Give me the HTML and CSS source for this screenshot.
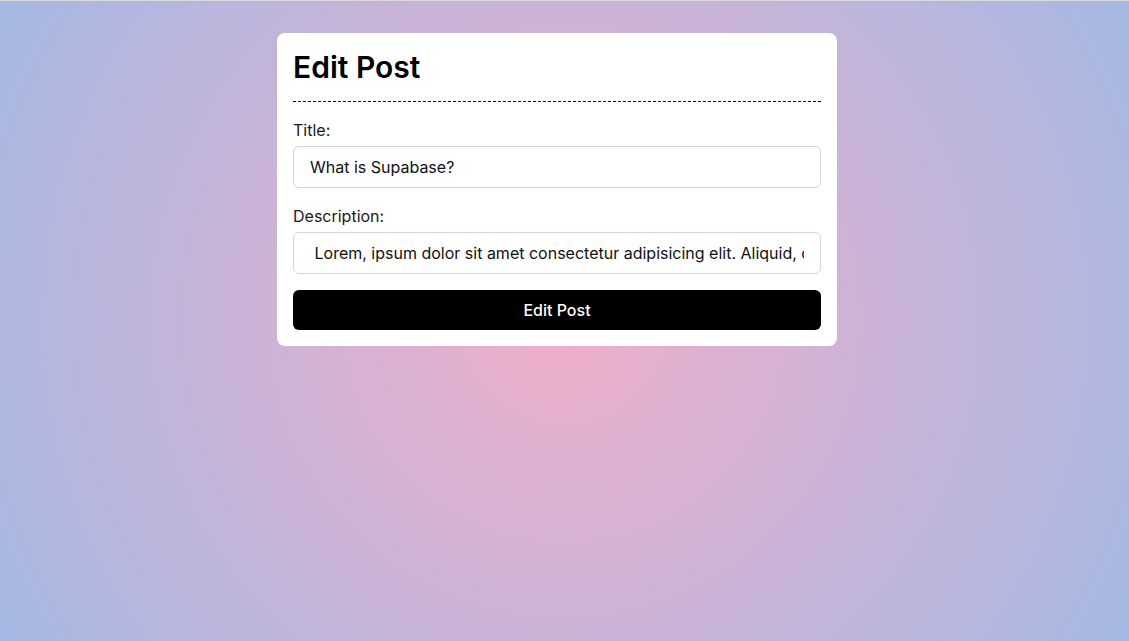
FILE: index.html
```html
<!DOCTYPE html>
<html lang="en">
<head>
<meta charset="utf-8">
<title>Edit Post</title>
<link rel="stylesheet" href="styles.css">
</head>
<body>
<div class="page">
  <form class="card">
    <h1 class="card-title">Edit Post</h1>
    <div class="field">
      <label class="label" for="title">Title:</label>
      <input class="input" id="title" type="text" value="What is Supabase?">
    </div>
    <div class="field">
      <label class="label" for="desc">Description:</label>
      <input class="input" id="desc" type="text" value=" Lorem, ipsum dolor sit amet consectetur adipisicing elit. Aliquid, consequatur.">
    </div>
    <button class="btn" type="button">Edit Post</button>
  </form>
</div>
</body>
</html>
```

FILE: styles.css
```css
* { box-sizing: border-box; }
html, body { margin: 0; padding: 0; height: 100%; }
body {
  font-family: Inter, "Noto Sans", sans-serif;
  color: #111;
  background: radial-gradient(circle 800px at 50% 50%, #eeaeca 0%, #94bbe9 100%);
}
.page {
  min-height: 100vh;
  border-top: 1px solid #d9d9d9;
  display: flex;
  justify-content: center;
  align-items: flex-start;
  padding: 32px 15px 0 0;
}
.card {
  width: 560px;
  background: #fff;
  border-radius: 8px;
  padding: 16px;
  display: flex;
  flex-direction: column;
  gap: 16px;
}
.card-title {
  margin: 0;
  font-size: 30px;
  line-height: 36px;
  font-weight: 600;
  color: #000;
  padding-bottom: 16px;
  border-bottom: 1px dashed #000;
}
.field {
  display: flex;
  flex-direction: column;
  gap: 4px;
}
.label {
  font-size: 16px;
  line-height: 24px;
  color: #1a1a1a;
}
.input {
  font-family: inherit;
  font-size: 16px;
  line-height: 24px;
  height: 42px;
  padding: 8px 16px;
  border: 1px solid #d4d4dc;
  border-radius: 6px;
  color: #111;
  background: #fff;
  outline: none;
}
.btn {
  font-family: inherit;
  font-size: 16px;
  font-weight: 500;
  height: 40px;
  border: none;
  border-radius: 6px;
  background: #000;
  color: #fff;
  cursor: pointer;
}
```
